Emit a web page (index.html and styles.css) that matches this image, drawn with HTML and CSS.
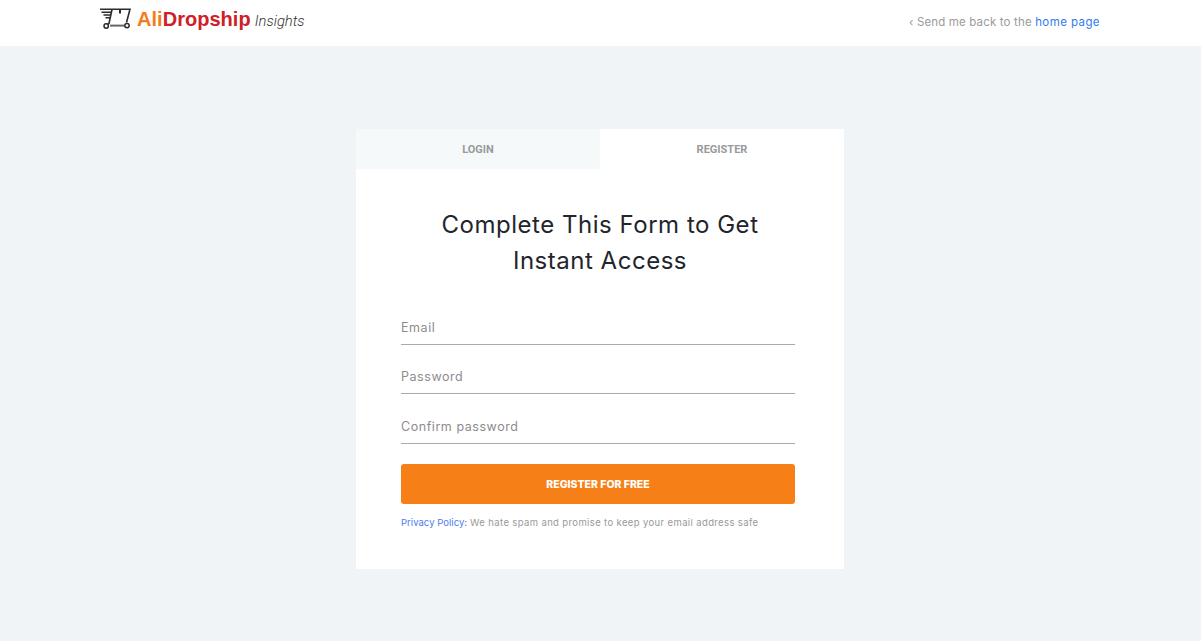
FILE: index.html
```html
<!DOCTYPE html>
<html lang="en">
<head>
<meta charset="utf-8">
<title>AliDropship Insights</title>
<link rel="stylesheet" href="styles.css">
</head>
<body>
<header class="topbar">
  <div class="topbar-inner">
    <a class="logo" href="#">
      <svg class="logo-icon" viewBox="0 0 32 22" width="32" height="22" aria-hidden="true">
        <g fill="none" stroke="#2b2b2b">
          <path d="M1 2.2H31L27.5 15.5" stroke-width="1.6"/>
          <path d="M2.5 5.2H12.5M4.5 8H12M6.5 10.8H11.5" stroke-width="1.5"/>
          <path d="M13 2.5L10 16.5L8 17.5" stroke-width="1.6"/>
          <path d="M21 2.5V6.5" stroke-width="2"/>
          <path d="M11 18.6H25.5" stroke-width="2" stroke="#666"/>
          <circle cx="7.2" cy="19" r="2.2" stroke-width="1.5"/>
          <circle cx="28" cy="18.6" r="2.2" stroke-width="1.5"/>
        </g>
      </svg>
      <span class="logo-ali">Ali</span><span class="logo-drop">Dropship</span>
      <span class="logo-sub">Insights</span>
    </a>
    <p class="back">‹ Send me back to the <a href="#">home page</a></p>
  </div>
</header>
<main class="page">
  <section class="card">
    <div class="tabs">
      <a class="tab tab-muted" href="#">LOGIN</a>
      <a class="tab" href="#">REGISTER</a>
    </div>
    <div class="card-body">
      <h1 class="title">Complete This Form to Get<br>Instant Access</h1>
      <form class="form">
        <input class="field" type="email" placeholder="Email">
        <input class="field" type="password" placeholder="Password">
        <input class="field" type="password" placeholder="Confirm password">
        <button class="submit" type="button">REGISTER FOR FREE</button>
      </form>
      <p class="note"><a href="#">Privacy Policy:</a> We hate spam and promise to keep your email address safe</p>
    </div>
  </section>
</main>
</body>
</html>
```
FILE: styles.css
```css
* { box-sizing: border-box; }
html, body { margin: 0; height: 100%; }
body {
  background: #f1f4f7;
  font-family: "Inter", "Liberation Sans", sans-serif;
  color: #22252c;
  overflow: hidden;
}
a { text-decoration: none; }

.topbar { background: #fff; height: 46px; }
.topbar-inner {
  width: 1000px;
  margin: 0 0 0 100px;
  height: 46px;
  display: flex;
  justify-content: space-between;
  align-items: flex-start;
}
.logo { display: flex; align-items: baseline; padding-top: 6px; height: 46px; }
.logo-icon { align-self: flex-start; margin-right: 6px; margin-top: 1px; margin-left: -1px; }
.logo-ali, .logo-drop {
  font-family: "Liberation Sans", sans-serif;
  font-weight: 700;
  font-size: 20px;
  line-height: 26px;
  letter-spacing: 0.03px;
}
.logo-ali { color: #f47d1a; }
.logo-drop { color: #cf2027; }
.logo-sub {
  font-family: "Roboto", sans-serif;
  font-weight: 300;
  font-style: italic;
  font-size: 14.8px;
  color: #333;
  margin-left: 4px;
}
.back {
  margin: 15px 0 0;
  font-size: 11.5px;
  line-height: 14px;
  color: #9b9b9b;
  letter-spacing: 0.15px;
}
.back a { color: #2f7bf0; letter-spacing: 0.42px; }

.page { display: flex; justify-content: center; padding: 83px 1px 0 0; }
.card { width: 488px; height: 440px; background: #fff; }
.tabs { display: flex; height: 40px; }
.tab {
  flex: 1;
  display: flex;
  align-items: center;
  justify-content: center;
  font-family: "Roboto", sans-serif;
  font-weight: 700;
  font-size: 11px;
  color: #9a9a9a;
}
.tab-muted { background: #f6f9fa; }
.card-body { padding: 38px 49px 0 45px; }
.title {
  margin: 0 -4px 28.75px 0;
  font-size: 24px;
  line-height: 36px;
  font-weight: 400;
  text-align: center;
  color: #22252c;
  letter-spacing: 0.52px;
}
.form { display: flex; flex-direction: column; }
.field {
  height: 37px;
  margin-bottom: 12.5px;
  border: 0;
  border-bottom: 1px solid #aaa;
  background: transparent;
  padding: 3px 0 0;
  font: 400 12.5px "Inter", sans-serif;
  letter-spacing: 0.55px;
  outline: none;
}
.field::placeholder { color: #8f8a90; opacity: 1; }
.submit {
  height: 40px;
  margin-top: 7.75px;
  border: 0;
  border-radius: 3px;
  background: #f77f17;
  color: #fff;
  font: 800 10.5px "Inter", sans-serif;
}
.note {
  margin: 13px 0 0;
  font-size: 9.5px;
  line-height: 12px;
  color: #999;
  letter-spacing: 0.37px;
}
.note a { color: #4d7cf0; letter-spacing: 0.03px; }
```
